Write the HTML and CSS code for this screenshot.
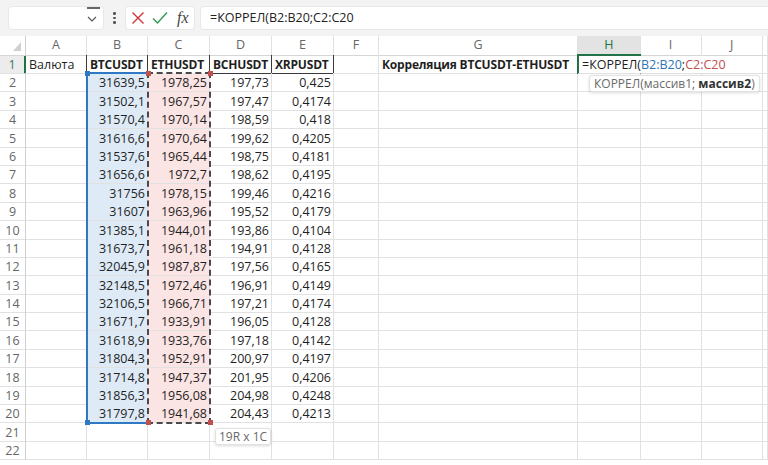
FILE: index.html
```html
<!DOCTYPE html>
<html lang="ru">
<head>
<meta charset="utf-8">
<title>КОРРЕЛ</title>
<link rel="stylesheet" href="styles.css">
</head>
<body>
<div class="toolbar">
  <div class="namebox"><span class="nb-bar"></span><svg class="chev" width="10" height="6" viewBox="0 0 10 6"><path d="M1 1l4 4 4-4" fill="none" stroke="#555" stroke-width="1.2"/></svg></div>
  <div class="dots"><i></i><i></i><i></i></div>
  <div class="fnbox">
    <svg width="14" height="14" viewBox="0 0 14 14"><path d="M1.5 1.5l11 11M12.5 1.5l-11 11" stroke="#d13438" stroke-width="1.4" fill="none"/></svg>
    <svg width="16" height="14" viewBox="0 0 16 14"><path d="M1 7.5l4.5 4.5L15 1.5" stroke="#2f9a52" stroke-width="1.4" fill="none"/></svg>
    <span class="fx">fx</span>
  </div>
  <div class="formula">=КОРРЕЛ(B2:B20;C2:C20</div>
</div>

<div class="sheet">
  <div class="row head"><div class="corner"><span class="tri"></span></div><div class="ch">A</div><div class="ch">B</div><div class="ch">C</div><div class="ch">D</div><div class="ch">E</div><div class="ch">F</div><div class="ch">G</div><div class="ch act">H</div><div class="ch">I</div><div class="ch">J</div><div class="ch"></div></div>
  <div class="row"><div class="rh act">1</div><div class="c t hl">Валюта</div><div class="c t b hd">BTCUSDT</div><div class="c t b hd">ETHUSDT</div><div class="c t b hd">BCHUSDT</div><div class="c t b hd">XRPUSDT</div><div class="c"></div><div class="c t b">Корреляция BTCUSDT-ETHUSDT</div><div class="c t edit nb">=КОРРЕЛ(<span class="rb">B2:B20</span>;<span class="rr">C2:C20</span></div><div class="c nb"></div><div class="c"></div><div class="c"></div></div>
  <div class="row"><div class="rh">2</div><div class="c"></div><div class="c n sb">31639,5</div><div class="c n sc">1978,25</div><div class="c n">197,73</div><div class="c n">0,425</div><div class="c"></div><div class="c"></div><div class="c"></div><div class="c"></div><div class="c"></div><div class="c"></div></div>
  <div class="row"><div class="rh">3</div><div class="c"></div><div class="c n sb">31502,1</div><div class="c n sc">1967,57</div><div class="c n">197,47</div><div class="c n">0,4174</div><div class="c"></div><div class="c"></div><div class="c"></div><div class="c"></div><div class="c"></div><div class="c"></div></div>
  <div class="row"><div class="rh">4</div><div class="c"></div><div class="c n sb">31570,4</div><div class="c n sc">1970,14</div><div class="c n">198,59</div><div class="c n">0,418</div><div class="c"></div><div class="c"></div><div class="c"></div><div class="c"></div><div class="c"></div><div class="c"></div></div>
  <div class="row"><div class="rh">5</div><div class="c"></div><div class="c n sb">31616,6</div><div class="c n sc">1970,64</div><div class="c n">199,62</div><div class="c n">0,4205</div><div class="c"></div><div class="c"></div><div class="c"></div><div class="c"></div><div class="c"></div><div class="c"></div></div>
  <div class="row"><div class="rh">6</div><div class="c"></div><div class="c n sb">31537,6</div><div class="c n sc">1965,44</div><div class="c n">198,75</div><div class="c n">0,4181</div><div class="c"></div><div class="c"></div><div class="c"></div><div class="c"></div><div class="c"></div><div class="c"></div></div>
  <div class="row"><div class="rh">7</div><div class="c"></div><div class="c n sb">31656,6</div><div class="c n sc">1972,7</div><div class="c n">198,62</div><div class="c n">0,4195</div><div class="c"></div><div class="c"></div><div class="c"></div><div class="c"></div><div class="c"></div><div class="c"></div></div>
  <div class="row"><div class="rh">8</div><div class="c"></div><div class="c n sb">31756</div><div class="c n sc">1978,15</div><div class="c n">199,46</div><div class="c n">0,4216</div><div class="c"></div><div class="c"></div><div class="c"></div><div class="c"></div><div class="c"></div><div class="c"></div></div>
  <div class="row"><div class="rh">9</div><div class="c"></div><div class="c n sb">31607</div><div class="c n sc">1963,96</div><div class="c n">195,52</div><div class="c n">0,4179</div><div class="c"></div><div class="c"></div><div class="c"></div><div class="c"></div><div class="c"></div><div class="c"></div></div>
  <div class="row"><div class="rh">10</div><div class="c"></div><div class="c n sb">31385,1</div><div class="c n sc">1944,01</div><div class="c n">193,86</div><div class="c n">0,4104</div><div class="c"></div><div class="c"></div><div class="c"></div><div class="c"></div><div class="c"></div><div class="c"></div></div>
  <div class="row"><div class="rh">11</div><div class="c"></div><div class="c n sb">31673,7</div><div class="c n sc">1961,18</div><div class="c n">194,91</div><div class="c n">0,4128</div><div class="c"></div><div class="c"></div><div class="c"></div><div class="c"></div><div class="c"></div><div class="c"></div></div>
  <div class="row"><div class="rh">12</div><div class="c"></div><div class="c n sb">32045,9</div><div class="c n sc">1987,87</div><div class="c n">197,56</div><div class="c n">0,4165</div><div class="c"></div><div class="c"></div><div class="c"></div><div class="c"></div><div class="c"></div><div class="c"></div></div>
  <div class="row"><div class="rh">13</div><div class="c"></div><div class="c n sb">32148,5</div><div class="c n sc">1972,46</div><div class="c n">196,91</div><div class="c n">0,4149</div><div class="c"></div><div class="c"></div><div class="c"></div><div class="c"></div><div class="c"></div><div class="c"></div></div>
  <div class="row"><div class="rh">14</div><div class="c"></div><div class="c n sb">32106,5</div><div class="c n sc">1966,71</div><div class="c n">197,21</div><div class="c n">0,4174</div><div class="c"></div><div class="c"></div><div class="c"></div><div class="c"></div><div class="c"></div><div class="c"></div></div>
  <div class="row"><div class="rh">15</div><div class="c"></div><div class="c n sb">31671,7</div><div class="c n sc">1933,91</div><div class="c n">196,05</div><div class="c n">0,4128</div><div class="c"></div><div class="c"></div><div class="c"></div><div class="c"></div><div class="c"></div><div class="c"></div></div>
  <div class="row"><div class="rh">16</div><div class="c"></div><div class="c n sb">31618,9</div><div class="c n sc">1933,76</div><div class="c n">197,18</div><div class="c n">0,4142</div><div class="c"></div><div class="c"></div><div class="c"></div><div class="c"></div><div class="c"></div><div class="c"></div></div>
  <div class="row"><div class="rh">17</div><div class="c"></div><div class="c n sb">31804,3</div><div class="c n sc">1952,91</div><div class="c n">200,97</div><div class="c n">0,4197</div><div class="c"></div><div class="c"></div><div class="c"></div><div class="c"></div><div class="c"></div><div class="c"></div></div>
  <div class="row"><div class="rh">18</div><div class="c"></div><div class="c n sb">31714,8</div><div class="c n sc">1947,37</div><div class="c n">201,95</div><div class="c n">0,4206</div><div class="c"></div><div class="c"></div><div class="c"></div><div class="c"></div><div class="c"></div><div class="c"></div></div>
  <div class="row"><div class="rh">19</div><div class="c"></div><div class="c n sb">31856,3</div><div class="c n sc">1956,08</div><div class="c n">204,98</div><div class="c n">0,4248</div><div class="c"></div><div class="c"></div><div class="c"></div><div class="c"></div><div class="c"></div><div class="c"></div></div>
  <div class="row"><div class="rh">20</div><div class="c"></div><div class="c n sb">31797,8</div><div class="c n sc">1941,68</div><div class="c n">204,43</div><div class="c n">0,4213</div><div class="c"></div><div class="c"></div><div class="c"></div><div class="c"></div><div class="c"></div><div class="c"></div></div>
  <div class="row"><div class="rh">21</div><div class="c"></div><div class="c"></div><div class="c"></div><div class="c"></div><div class="c"></div><div class="c"></div><div class="c"></div><div class="c"></div><div class="c"></div><div class="c"></div><div class="c"></div></div>
  <div class="row"><div class="rh">22</div><div class="c"></div><div class="c"></div><div class="c"></div><div class="c"></div><div class="c"></div><div class="c"></div><div class="c"></div><div class="c"></div><div class="c"></div><div class="c"></div><div class="c"></div></div>

  <div class="range-b"><span class="h tl"></span><span class="h bl"></span></div>
  <div class="range-c"><span class="h tl"></span><span class="h tr"></span><span class="h bl"></span><span class="h br"></span></div>
  <div class="active-cell"></div>
  <div class="tip fn-tip">КОРРЕЛ(массив1; <b>массив2</b>)</div>
  <div class="tip size-tip">19R x 1C</div>
</div>
</body>
</html>
```

FILE: styles.css
```css
* { box-sizing: border-box; }
body {
  margin: 0;
  width: 768px;
  height: 465px;
  overflow: hidden;
  background: #fff;
  font-family: "Open Sans", "Noto Sans", sans-serif;
  color: #1f1f1f;
}

/* ---------- formula bar ---------- */
.toolbar {
  height: 36px;
  background: #f3f3f3;
  display: flex;
  align-items: center;
  padding-left: 8px;
}
.namebox {
  position: relative;
  width: 96px;
  height: 24px;
  background: #fff;
  border: 1px solid #e8e8e8;
  border-radius: 4px;
  display: flex;
  align-items: center;
  justify-content: flex-end;
  padding-right: 6px;
}
.nb-bar {
  position: absolute;
  top: 0;
  right: 3px;
  width: 13px;
  height: 1.5px;
  background: #666;
}
.chev { margin-top: 2px; }
.dots {
  width: 21px;
  display: flex;
  flex-direction: column;
  align-items: center;
  gap: 2px;
}
.dots i {
  width: 2.5px;
  height: 2.5px;
  border-radius: 50%;
  background: #555;
}
.fnbox {
  width: 70px;
  height: 24px;
  background: #fff;
  border: 1px solid #e8e8e8;
  border-radius: 4px;
  display: flex;
  align-items: center;
  gap: 7px;
  padding-left: 5px;
}
.fx {
  font-family: "Liberation Serif", serif;
  font-style: italic;
  font-size: 16px;
  color: #444;
  line-height: 1;
  margin-left: 2px;
}
.formula {
  flex: 1;
  margin-left: 5px;
  height: 24px;
  background: #fff;
  border: 1px solid #e8e8e8;
  border-right: 0;
  border-radius: 4px 0 0 4px;
  padding-left: 9px;
  font-size: 12.5px;
  line-height: 22px;
  color: #222;
}

/* ---------- sheet ---------- */
.sheet { position: relative; }
.row {
  display: grid;
  grid-template-columns: 26px 61px 61px 62px 62px 62px 45px 199px 62.5px 61px 61.5px 1fr;
  height: 18.4px;
}
.row.head { height: 19px; }
.corner, .ch, .rh, .c {
  border-right: 1px solid #e1e1e1;
  border-bottom: 1px solid #e1e1e1;
  font-size: 12.5px;
  white-space: nowrap;
  line-height: 17px;
  padding-top: 1px;
}
.head > div { border-bottom-color: #d6d6d6; padding-top: 0; }
.corner {
  position: relative;
  border-right-color: #cfcfcf;
}
.tri {
  position: absolute;
  right: 4px;
  bottom: 4px;
  width: 0;
  height: 0;
  border-left: 8px solid transparent;
  border-bottom: 9px solid #d0d0d0;
}
.ch {
  text-align: center;
  color: #666;
  line-height: 18px;
}
.ch.act {
  background: #e3e3e3;
  color: #217346;
  border-bottom: 2px solid #217346;
}
.rh {
  text-align: center;
  color: #666;
  border-right-color: #cfcfcf;
}
.rh.act {
  background: #ececec;
  color: #3b7a57;
  border-right: 2px solid #217346;
}
.c { overflow: hidden; }
.t { padding-left: 3px; }
.n { text-align: right; padding-right: 2px; }
.b {
  font-weight: 700;
  font-size: 12px;
  letter-spacing: -0.2px;
}
.hl { border-right-color: #3a3a3a; }
.hd {
  border-right-color: #3a3a3a;
  border-bottom-color: #3a3a3a;
  padding-left: 3px;
}
.sb { background: #deebf7; }
.sc { background: #fbe4e4; }
.nb { border-right-color: transparent; }
.edit {
  overflow: visible;
  position: relative;
  z-index: 2;
  padding-left: 4px;
}
.rb { color: #2e75b6; }
.rr { color: #c0504d; }

/* ---------- overlays ---------- */
.range-b {
  position: absolute;
  left: 86px;
  top: 36.4px;
  width: 62px;
  height: 351.6px;
  border: 2px solid #2f78c4;
  border-right: 0;
}
.range-c {
  position: absolute;
  left: 147px;
  top: 36.4px;
  width: 64px;
  height: 351.6px;
  border: 2px dashed #4a4a4a;
}
.h {
  position: absolute;
  width: 5px;
  height: 5px;
}
.range-b .h { background: #2f78c4; }
.range-c .h { background: #c0504d; }
.range-b .tl { left: -3.5px; top: -3.5px; }
.range-b .bl { left: -3.5px; bottom: -3.5px; }
.range-c .tl { left: -3.5px; top: -3.5px; }
.range-c .tr { right: -3.5px; top: -3.5px; }
.range-c .bl { left: -3.5px; bottom: -3.5px; }
.range-c .br { right: -3.5px; bottom: -3.5px; }
.active-cell {
  position: absolute;
  left: 577px;
  top: 18px;
  width: 64px;
  height: 20px;
  border: 2px solid #217346;
  border-right: 0;
  border-bottom-width: 1.5px;
}
.tip {
  position: absolute;
  background: #fff;
  border: 1px solid #e2e2e2;
  border-radius: 3px;
  box-shadow: 0 1px 3px rgba(0,0,0,0.15);
  font-size: 12px;
  line-height: 15px;
  color: #6a6a6a;
  white-space: nowrap;
  z-index: 3;
}
.fn-tip {
  left: 589px;
  top: 39px;
  padding: 0 4px;
}
.fn-tip b { color: #333; }
.size-tip {
  left: 215px;
  top: 392px;
  padding: 0 3px;
}
```
